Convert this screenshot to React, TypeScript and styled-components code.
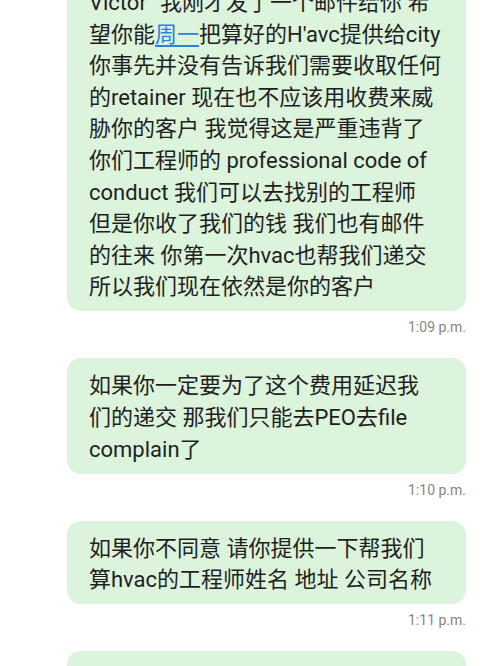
import React from "react";
import styled, { createGlobalStyle } from "styled-components";

interface Message {
  lines: React.ReactNode[];
  time: string;
}

const GlobalStyle = createGlobalStyle`
  html, body {
    margin: 0;
    padding: 0;
    background: #ffffff;
    overflow: hidden;
  }
  body {
    font-family: Roboto, "Noto Sans CJK SC", sans-serif;
  }
`;

const Chat = styled.div`
  display: flex;
  flex-direction: column;
  gap: 23px;
  margin-top: -25px;
  padding: 0 34px 0 67px;
  height: 700px;
`;

const MessageGroup = styled.div`
  display: flex;
  flex-direction: column;
  align-items: flex-end;
  gap: 8px;
`;

const Bubble = styled.div`
  align-self: stretch;
  background: #dcf3dc;
  border-radius: 14px;
  padding: 12px 10px 8.5px 22px;
  color: #1f1f1f;
  font-size: 22px;
  line-height: 31.6px;
  min-height: 60px;
`;

const Line = styled.div`
  white-space: nowrap;
`;

const Link = styled.span`
  color: #2d7fe0;
  text-decoration: underline;
  text-underline-offset: 3px;
`;

const Time = styled.div`
  font-size: 14px;
  line-height: 16px;
  color: #858585;
`;

const messages: Message[] = [
  {
    lines: [
      "Victor \u201C我刚才发了一个邮件给你 希",
      <>
        望你能<Link>周一</Link>把算好的H'avc提供给city
      </>,
      "你事先并没有告诉我们需要收取任何",
      "的retainer 现在也不应该用收费来威",
      "胁你的客户 我觉得这是严重违背了",
      "你们工程师的 professional code of",
      "conduct 我们可以去找别的工程师",
      "但是你收了我们的钱 我们也有邮件",
      "的往来 你第一次hvac也帮我们递交",
      "所以我们现在依然是你的客户",
    ],
    time: "1:09 p.m.",
  },
  {
    lines: [
      "如果你一定要为了这个费用延迟我",
      "们的递交 那我们只能去PEO去file",
      "complain了",
    ],
    time: "1:10 p.m.",
  },
  {
    lines: ["如果你不同意 请你提供一下帮我们", "算hvac的工程师姓名 地址 公司名称"],
    time: "1:11 p.m.",
  },
  {
    lines: [""],
    time: "",
  },
];

const App: React.FC = () => {
  return (
    <>
      <GlobalStyle />
      <Chat>
        {messages.map((msg, i) => (
          <MessageGroup key={i}>
            <Bubble>
              {msg.lines.map((line, j) => (
                <Line key={j}>{line}</Line>
              ))}
            </Bubble>
            {msg.time && <Time>{msg.time}</Time>}
          </MessageGroup>
        ))}
      </Chat>
    </>
  );
};

export default App;
